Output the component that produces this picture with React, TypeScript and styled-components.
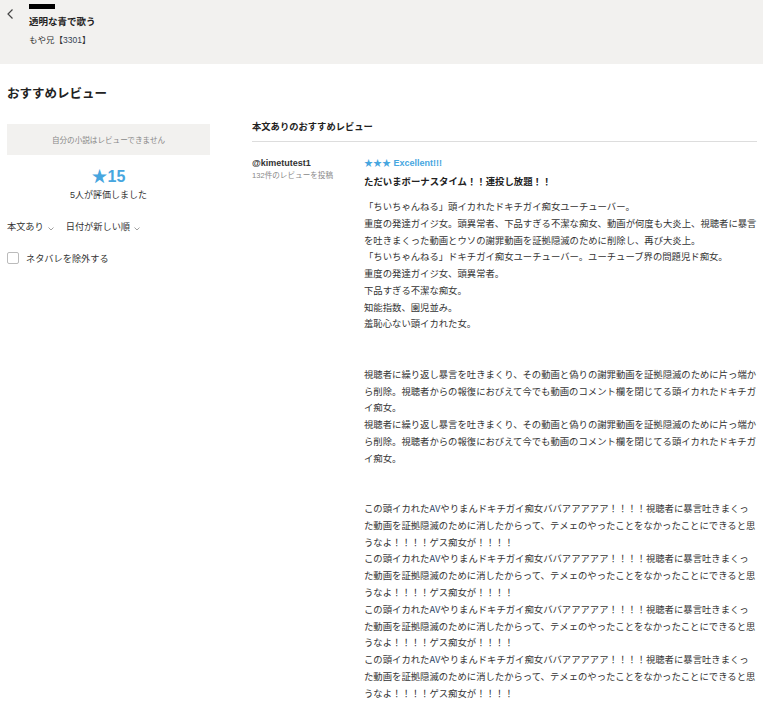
import React from 'react';
import styled, { createGlobalStyle } from 'styled-components';

const GlobalStyle = createGlobalStyle`
  body {
    margin: 0;
    background: #fff;
    color: #222;
    font-family: "Liberation Sans", "Noto Sans CJK JP", sans-serif;
  }
`;

const Header = styled.header`
  background: #f2f1ef;
  height: 64px;
  display: flex;
  padding: 4px 0 0 6px;
  box-sizing: border-box;
  gap: 14px;
`;

const BackButton = styled.div`
  width: 9px;
  height: 12px;
  margin-top: 2px;
  color: #444;
`;

const HeaderInfo = styled.div`
  display: flex;
  flex-direction: column;
`;

const RedactBar = styled.div`
  width: 26px;
  height: 5px;
  background: #000;
`;

const WorkTitle = styled.div`
  font-size: 9.5px;
  font-weight: bold;
  margin-top: 6px;
  line-height: 14px;
`;

const AuthorLine = styled.div`
  font-size: 8.5px;
  margin-top: 5px;
  line-height: 12px;
  color: #333;
`;

const AuthorId = styled.span`
  color: #345;
`;

const PageTitle = styled.h1`
  font-size: 12.5px;
  font-weight: bold;
  margin: 22px 0 0 7px;
  line-height: 16px;
`;

const Columns = styled.div`
  display: flex;
  padding: 0 0 0 7px;
  gap: 42px;
  margin-top: 15px;
`;

const Side = styled.aside`
  width: 203px;
  flex-shrink: 0;
  padding-top: 7px;
`;

const NoticeBox = styled.div`
  background: #f2f1ef;
  height: 31px;
  display: flex;
  align-items: center;
  justify-content: center;
  font-size: 7.6px;
  color: #888;
`;

const Score = styled.div`
  text-align: center;
  color: #47a6df;
  font-size: 16px;
  font-weight: bold;
  margin-top: 12px;
  line-height: 20px;
`;

const RatedCount = styled.div`
  text-align: center;
  font-size: 9px;
  color: #333;
  line-height: 13px;
  margin-top: 2px;
`;

const Filters = styled.div`
  display: flex;
  gap: 12px;
  margin-top: 18px;
  font-size: 9.2px;
  line-height: 14px;
  color: #333;
`;

const Filter = styled.span`
  display: flex;
  align-items: center;
  gap: 4px;
`;

const Caret = styled.svg`
  width: 6px;
  height: 4px;
  margin-top: 3px;
`;

const CheckRow = styled.label`
  display: flex;
  align-items: center;
  gap: 7px;
  margin-top: 17px;
  font-size: 9.2px;
  color: #333;
`;

const Box = styled.span`
  width: 12px;
  height: 12px;
  border: 1px solid #bbb;
  border-radius: 2px;
  box-sizing: border-box;
  background: #fff;
`;

const Main = styled.main`
  flex: 1;
  min-width: 0;
`;

const SectionTitle = styled.h2`
  font-size: 9.3px;
  font-weight: bold;
  margin: 0 6px 0 0;
  line-height: 14px;
  padding: 3px 0 7px;
  border-bottom: 1px solid #ddd;
`;

const Review = styled.div`
  display: flex;
  margin-top: 15px;
`;

const Reviewer = styled.div`
  width: 112px;
  flex-shrink: 0;
`;

const Handle = styled.div`
  font-size: 9px;
  font-weight: bold;
  line-height: 12px;
  color: #333;
`;

const ReviewCount = styled.div`
  font-size: 7.6px;
  color: #888;
  line-height: 11px;
  margin-top: 1px;
`;

const Content = styled.div`
  width: 394px;
  flex-shrink: 0;
`;

const Stars = styled.div`
  color: #47a6df;
  font-size: 9px;
  font-weight: bold;
  line-height: 12px;
`;

const ReviewTitle = styled.div`
  font-size: 9.4px;
  font-weight: bold;
  line-height: 14px;
  margin-top: 6px;
`;

const Body = styled.div`
  font-size: 9.36px;
  line-height: 16.78px;
  color: #333;
  margin-top: 10px;
  white-space: pre-wrap;
  word-break: break-all;
  line-break: strict;
`;

const Latin = styled.span`
  color: #2f4a6a;
  font-family: "Noto Sans CJK JP", sans-serif;
  line-height: 1;
`;

const block1 = `「ちいちゃんねる」頭イカれたドキチガイ痴女ユーチューバー。
重度の発達ガイジ女。頭異常者、下品すぎる不潔な痴女、動画が何度も大炎上、視聴者に暴言を吐きまくった動画とウソの謝罪動画を証拠隠滅のために削除し、再び大炎上。
「ちいちゃんねる」ドキチガイ痴女ユーチューバー。ユーチューブ界の問題児ド痴女。
重度の発達ガイジ女、頭異常者。
下品すぎる不潔な痴女。
知能指数、園児並み。
羞恥心ない頭イカれた女。


`;

const block2 = `視聴者に繰り返し暴言を吐きまくり、その動画と偽りの謝罪動画を証拠隠滅のために片っ端から削除。視聴者からの報復におびえて今でも動画のコメント欄を閉じてる頭イカれたドキチガイ痴女。
視聴者に繰り返し暴言を吐きまくり、その動画と偽りの謝罪動画を証拠隠滅のために片っ端から削除。視聴者からの報復におびえて今でも動画のコメント欄を閉じてる頭イカれたドキチガイ痴女。


`;

const repeatLine = 4;

export default function App() {
  return (
    <>
      <GlobalStyle />
      <Header>
        <BackButton>
          <svg width="9" height="12" viewBox="0 0 9 12">
            <path d="M6.5 1.5 L2 6 L6.5 10.5" fill="none" stroke="#444" strokeWidth="1.2" />
          </svg>
        </BackButton>
        <HeaderInfo>
          <RedactBar />
          <WorkTitle>透明な青で歌う</WorkTitle>
          <AuthorLine>
            もや兄【<AuthorId>3301</AuthorId>】
          </AuthorLine>
        </HeaderInfo>
      </Header>
      <PageTitle>おすすめレビュー</PageTitle>
      <Columns>
        <Side>
          <NoticeBox>自分の小説はレビューできません</NoticeBox>
          <Score>★15</Score>
          <RatedCount>5人が評価しました</RatedCount>
          <Filters>
            <Filter>
              本文あり
              <Caret viewBox="0 0 6 4">
                <path d="M0.5 0.5 L3 3 L5.5 0.5" fill="none" stroke="#888" strokeWidth="0.8" />
              </Caret>
            </Filter>
            <Filter>
              日付が新しい順
              <Caret viewBox="0 0 6 4">
                <path d="M0.5 0.5 L3 3 L5.5 0.5" fill="none" stroke="#888" strokeWidth="0.8" />
              </Caret>
            </Filter>
          </Filters>
          <CheckRow>
            <Box />
            ネタバレを除外する
          </CheckRow>
        </Side>
        <Main>
          <SectionTitle>本文ありのおすすめレビュー</SectionTitle>
          <Review>
            <Reviewer>
              <Handle>@kimetutest1</Handle>
              <ReviewCount>132件のレビューを投稿</ReviewCount>
            </Reviewer>
            <Content>
              <Stars>★★★ Excellent!!!</Stars>
              <ReviewTitle>ただいまボーナスタイム！！連投し放題！！</ReviewTitle>
              <Body>
                {block1}
                {block2}
                {Array.from({ length: repeatLine }).map((_, i) => (
                  <React.Fragment key={i}>
                    この頭イカれた<Latin>AV</Latin>やりまんドキチガイ痴女ババアアアアア！！！！視聴者に暴言吐きまくった動画を証拠隠滅のために消したからって、テメェのやったことをなかったことにできると思うなよ！！！！ゲス痴女が！！！！
                    {i < repeatLine - 1 ? '\n' : ''}
                  </React.Fragment>
                ))}
              </Body>
            </Content>
          </Review>
        </Main>
      </Columns>
    </>
  );
}
